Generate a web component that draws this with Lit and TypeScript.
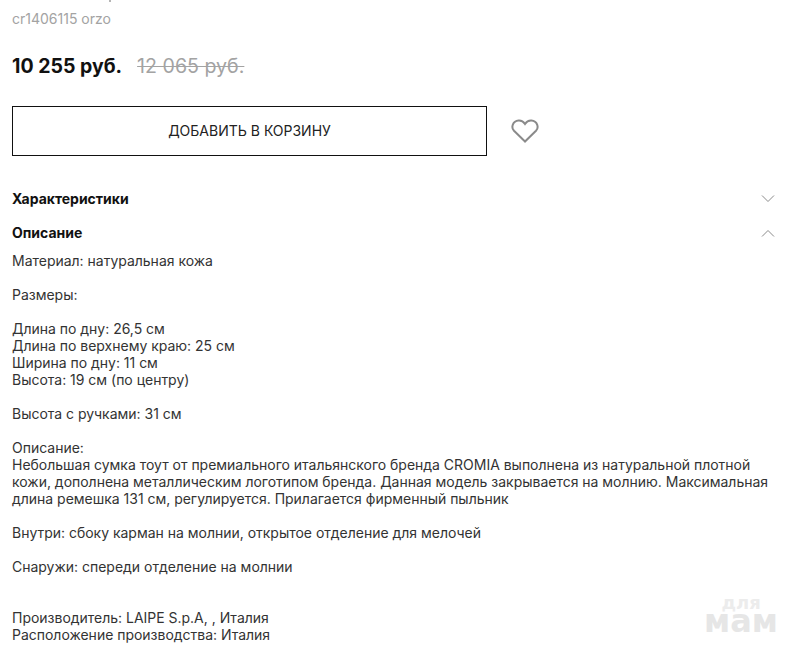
import { LitElement, html, css } from 'lit';
import { customElement } from 'lit/decorators.js';

const chevron = (up: boolean) => html`
  <svg class="chevron" width="14" height="8" viewBox="0 0 14 8">
    <path d=${up ? 'M1 7.5L7 1.5L13 7.5' : 'M1 .5L7 6.5L13 .5'} fill="none" stroke="#8a8a8a" stroke-width="1"></path>
  </svg>
`;

@customElement('app-root')
export class AppRoot extends LitElement {
  static styles = css`
    :host {
      display: block;
      position: relative;
      height: 648px;
      overflow: hidden;
      background: #fff;
      font-family: Inter, 'Liberation Sans', sans-serif;
      color: #222;
    }
    .page {
      padding: 0 12px;
    }
    /* bottom of a descender from the line cut off by the screenshot */
    .cut {
      width: 2px;
      height: 2px;
      margin: 0 0 8px 97px;
      background: #b5b5b5;
    }
    .sku {
      font-size: 14px;
      line-height: 17px;
      color: #a3a3a3;
    }
    .prices {
      display: flex;
      align-items: baseline;
      gap: 15px;
      margin-top: 26px;
      line-height: 26px;
    }
    .price {
      font-size: 19.5px;
      font-weight: 700;
      color: #111;
    }
    .old {
      font-size: 19.6px;
      color: #a3a3a3;
      text-decoration: line-through;
    }
    .actions {
      display: flex;
      align-items: center;
      gap: 24px;
      margin-top: 27px;
    }
    .buy {
      box-sizing: border-box;
      width: 475px;
      height: 50px;
      padding-bottom: 1px;
      display: flex;
      align-items: center;
      justify-content: center;
      border: 1px solid #111;
      font-size: 14px;
      color: #222;
    }
    .heart {
      display: block;
    }
    .row {
      display: flex;
      align-items: center;
      justify-content: space-between;
      padding-right: 5px;
      font-size: 14px;
      line-height: 17px;
      font-weight: 700;
      color: #111;
    }
    .row.first {
      margin-top: 34px;
    }
    .row.second {
      margin-top: 17px;
    }
    .text {
      margin-top: 11px;
      font-size: 14px;
      line-height: 17px;
      letter-spacing: -0.015px;
      white-space: pre-line;
      color: #333;
    }
    .mark {
      position: absolute;
      right: 14px;
      bottom: 15px;
      text-align: center;
      font-family: 'DejaVu Sans', sans-serif;
      font-weight: 700;
      color: #e6e6e6;
    }
    .mark div:first-child {
      font-size: 18px;
      line-height: 12px;
      color: #ececec;
    }
    .mark div:last-child {
      font-size: 32px;
      line-height: 24px;
    }
  `;

  render() {
    const text = `Материал: натуральная кожа

Размеры:

Длина по дну: 26,5 см
Длина по верхнему краю: 25 см
Ширина по дну: 11 см
Высота: 19 см (по центру)

Высота с ручками: 31 см

Описание:
Небольшая сумка тоут от премиального итальянского бренда CROMIA выполнена из натуральной плотной
кожи, дополнена металлическим логотипом бренда. Данная модель закрывается на молнию. Максимальная
длина ремешка 131 см, регулируется. Прилагается фирменный пыльник

Внутри: сбоку карман на молнии, открытое отделение для мелочей

Снаружи: спереди отделение на молнии


Производитель: LAIPE S.p.A, , Италия
Расположение производства: Италия`;
    return html`
      <div class="page">
        <div class="cut"></div>
        <div class="sku">cr1406115 orzo</div>
        <div class="prices">
          <span class="price">10 255 руб.</span>
          <span class="old">12 065 руб.</span>
        </div>
        <div class="actions">
          <div class="buy">ДОБАВИТЬ В КОРЗИНУ</div>
          <svg class="heart" width="28" height="24" viewBox="0 0 28 24">
            <path d="M14 22.5L3 11.8C-.2 8.4 1.6 2 7.6 1.5C10.4 1.3 12.6 2.8 14 5C15.4 2.8 17.6 1.3 20.4 1.5C26.4 2 28.2 8.4 25 11.8Z" fill="none" stroke="#8a8a8a" stroke-width="2"></path>
          </svg>
        </div>
        <div class="row first"><span>Характеристики</span>${chevron(false)}</div>
        <div class="row second"><span>Описание</span>${chevron(true)}</div>
        <div class="text">${text}</div>
      </div>
      <div class="mark"><div>для</div><div>мам</div></div>
    `;
  }
}
